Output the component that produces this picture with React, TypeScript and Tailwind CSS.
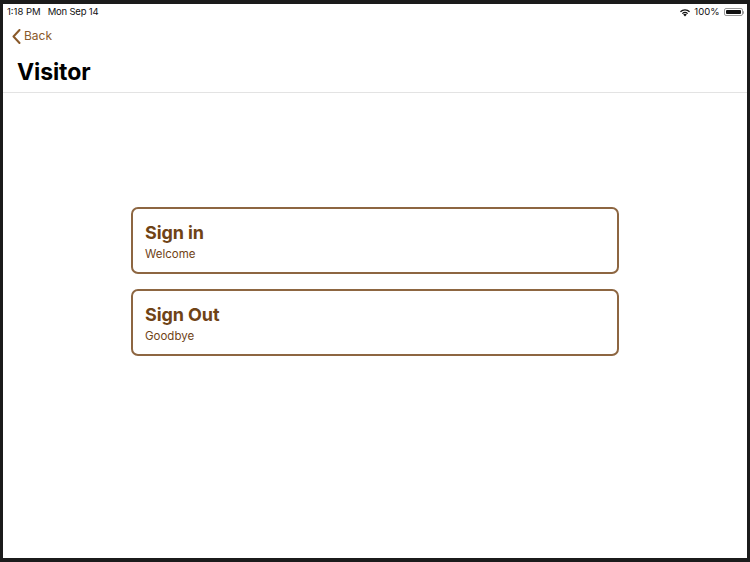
import React from "react";

function Card({ title, sub }: { title: string; sub: string }) {
  return (
    <div className="w-[488px] h-[67px] rounded-[7px] border-[2px] border-[#8d6641] px-[12px] pt-[12px] flex flex-col">
      <div className="text-[18px] leading-[23px] font-bold text-[#6f4316] tracking-[-0.1px]">{title}</div>
      <div className="text-[11.5px] leading-[16px] text-[#6f4316] mt-[2px]">{sub}</div>
    </div>
  );
}

export default function App() {
  return (
    <div
      className="w-[750px] h-[562px] bg-[#1b1b1b] pt-[4px] pl-[3px] pr-[3px] pb-[4px]"
      style={{ fontFamily: "Inter, 'Liberation Sans', Arial, sans-serif" }}
    >
      <div className="w-full h-full bg-white flex flex-col">
        <div className="h-[16px] flex items-center justify-between pl-[4px] pr-[3px] text-[9.5px] text-[#111]">
          <div className="flex gap-[7px]">
            <span>1:18 PM</span>
            <span className="tracking-[-0.2px]">Mon Sep 14</span>
          </div>
          <div className="flex items-center gap-[3px]">
            <svg width="12" height="9" viewBox="0 0 12 9">
              <path d="M6 8.6 L4.2 6.6 A2.6 2.6 0 0 1 7.8 6.6 Z" fill="#111" />
              <path d="M2.9 5.2 A4.6 4.6 0 0 1 9.1 5.2 L8.2 6.1 A3.3 3.3 0 0 0 3.8 6.1 Z" fill="#111" />
              <path d="M1 3.3 A7.2 7.2 0 0 1 11 3.3 L10.1 4.2 A5.9 5.9 0 0 0 1.9 4.2 Z" fill="#111" />
            </svg>
            <span>100%</span>
            <div className="flex items-center ml-[1px]">
              <div className="w-[19px] h-[8px] rounded-[2px] border border-[#999] p-[1px]">
                <div className="w-full h-full bg-[#111] rounded-[1px]" />
              </div>
              <div className="w-[1.5px] h-[3px] bg-[#999] rounded-r-[1px]" />
            </div>
          </div>
        </div>
        <div className="h-[33px] flex items-center pl-[9px] pb-[1px] text-[#8a5a2b]">
          <svg width="9" height="15" viewBox="0 0 9 15" className="mr-[3px]">
            <path d="M7.5 1 L1.5 7.5 L7.5 14" stroke="#8a5a2b" strokeWidth="2" fill="none" strokeLinecap="round" strokeLinejoin="round" />
          </svg>
          <span className="text-[12px]">Back</span>
        </div>
        <div className="h-[40px] border-b border-[#e3e3e3] pl-[14px] pt-[5px]">
          <div className="text-[23px] leading-[28px] font-bold text-black tracking-[-0.1px]">Visitor</div>
        </div>
        <div className="flex flex-col items-center pt-[114px] gap-[15px]">
          <Card title="Sign in" sub="Welcome" />
          <Card title="Sign Out" sub="Goodbye" />
        </div>
      </div>
    </div>
  );
}
